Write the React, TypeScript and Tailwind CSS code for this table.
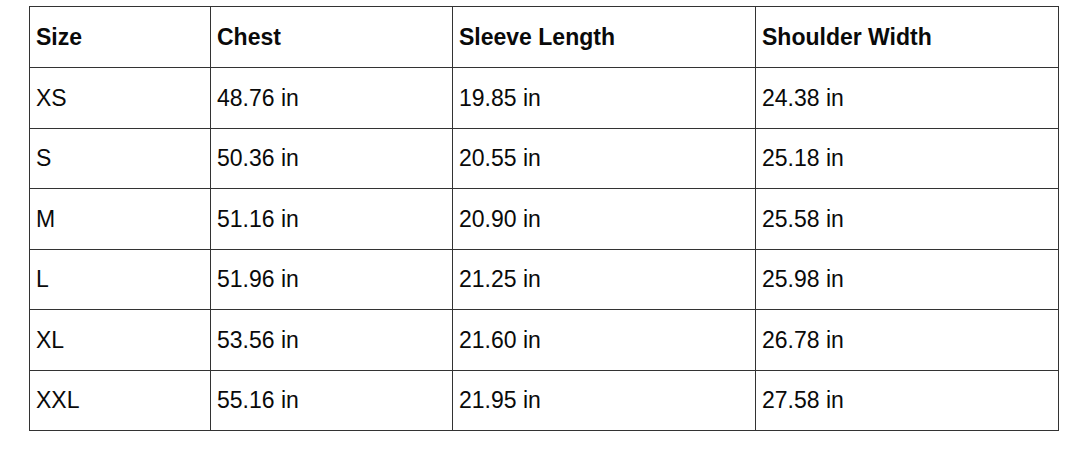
import React from "react";

const rows = [
  ["XS", "48.76 in", "19.85 in", "24.38 in"],
  ["S", "50.36 in", "20.55 in", "25.18 in"],
  ["M", "51.16 in", "20.90 in", "25.58 in"],
  ["L", "51.96 in", "21.25 in", "25.98 in"],
  ["XL", "53.56 in", "21.60 in", "26.78 in"],
  ["XXL", "55.16 in", "21.95 in", "27.58 in"],
];

export default function App() {
  return (
    <div className="w-[1065px] h-[459px] bg-white pt-[6px] pl-[29px]" style={{ fontFamily: '"Liberation Sans", Arial, sans-serif' }}>
      <table className="border-collapse table-fixed w-[1029px] text-[23px] leading-[26px] text-[#0a0a0a]">
        <colgroup>
          <col className="w-[181px]" />
          <col className="w-[242px]" />
          <col className="w-[303px]" />
          <col className="w-[303px]" />
        </colgroup>
        <thead>
          <tr className="h-[61px]">
            {["Size", "Chest", "Sleeve Length", "Shoulder Width"].map((h) => (
              <th key={h} className="border border-[#333] text-left font-bold pl-[6px] align-middle">
                {h}
              </th>
            ))}
          </tr>
        </thead>
        <tbody>
          {rows.map((r) => (
            <tr key={r[0]} className="h-[60.5px]">
              {r.map((c, i) => (
                <td key={i} className="border border-[#333] pl-[6px] align-middle">
                  {c}
                </td>
              ))}
            </tr>
          ))}
        </tbody>
      </table>
    </div>
  );
}
